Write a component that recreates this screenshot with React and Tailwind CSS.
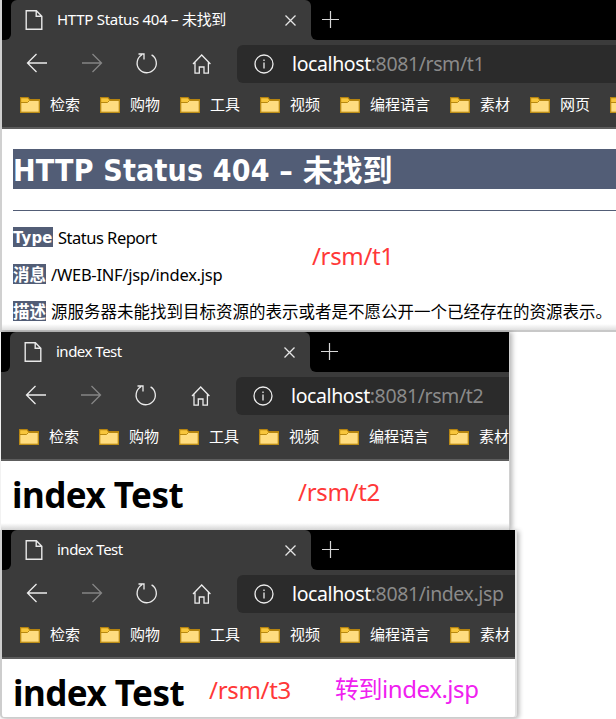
import React from 'react';

const UI = "font-['Noto_Sans','Noto_Sans_CJK_SC',sans-serif]";
const BOOKMARKS = ['检索', '购物', '工具', '视频', '编程语言', '素材'];

function FileIcon() {
  return (
    <svg width="18" height="20" viewBox="0 0 18 20" fill="none" stroke="#e8e8e8" strokeWidth="1.4" className="shrink-0">
      <path d="M1.2 0.8H11.4L16.8 6.2V19.2H1.2ZM11.2 0.8V6.3H16.8" />
    </svg>
  );
}

function FolderIcon() {
  return (
    <svg width="20" height="16" viewBox="0 0 20 16" className="shrink-0">
      <path d="M0.6 0.6H8L9.6 2.6H19.4V15.4H0.6Z" fill="#f8c63c" stroke="#b5830f" strokeWidth="1.2" />
      <path d="M0.8 5.5H7.5L9.5 3.5H19.2V15.2H0.8Z" fill="#ffdd80" stroke="#b88810" strokeWidth="1" />
    </svg>
  );
}

function NavIcons() {
  return (
    <svg width="232" height="50" viewBox="0 0 232 50" fill="none" stroke="#ececec" strokeWidth="1.3" className="shrink-0">
      <path d="M45 23H25.5M34.5 14L25.5 23L34.5 32" />
      <path d="M80 23H99.5M90.5 14L99.5 23L90.5 32" stroke="#858585" />
      <path d="M149.6 14.9A9.6 9.6 0 1 1 140 14.8M136.5 14H142V19.6" />
      <path d="M191 24L199.7 15L208.4 24M193 22.5V33.2H197.3V27H202V33.2H206.4V22.5" />
    </svg>
  );
}

function Bookmark({ name }) {
  return (
    <div className="flex shrink-0 items-center gap-[10px] whitespace-nowrap text-[15px] leading-5">
      <FolderIcon />
      <span className="-mt-[2px]">{name}</span>
    </div>
  );
}

function Chrome({ title, titleClass, path, pathClass, extra }) {
  return (
    <div className={`flex h-[129px] flex-col overflow-hidden border-b-2 border-[#5d5d5d] bg-[#3b3b3b] text-white ${UI}`}>
      <div className="flex h-10 shrink-0">
        <div className="z-10 w-[9px] shrink-0 rounded-br-md bg-black" />
        <div className="-mx-[6px] flex w-[312px] shrink-0 bg-linear-to-b from-black from-50% to-[#3b3b3b] to-50%">
          <div className="ml-[6px] flex h-10 w-[300px] items-center rounded-t-md bg-[#3b3b3b] pl-[14px] pr-[15px]">
            <FileIcon />
            <span className={`-mt-[2px] ml-[14px] whitespace-nowrap text-[15px] leading-5 ${titleClass}`}>{title}</span>
            <svg width="11" height="11" viewBox="0 0 11 11" stroke="#e6e6e6" strokeWidth="1.3" className="ml-auto">
              <path d="M0.5 0.5L10.5 10.5M10.5 0.5L0.5 10.5" />
            </svg>
          </div>
        </div>
        <div className="z-10 flex flex-1 items-center rounded-bl-md bg-black pl-[11px]">
          <svg width="17" height="17" viewBox="0 0 17 17" stroke="#d8d8d8" strokeWidth="1.2" className="-mt-[2px]">
            <path d="M8.5 0V17M0 8.5H17" />
          </svg>
        </div>
      </div>
      <div className="flex h-[50px] shrink-0">
        <NavIcons />
        <div className="ml-[3px] mt-[5px] flex h-[38px] min-w-0 flex-1 items-center rounded-l-md bg-[#2b2b2b] pl-[17px]">
          <svg width="20" height="20" viewBox="0 0 20 20" fill="none" stroke="#ececec" strokeWidth="1.3" className="-mt-px shrink-0">
            <circle cx="10" cy="10" r="9" />
            <path d="M10 8.6V14.5M10 5.5V7.1" />
          </svg>
          <span className={`ml-[18px] whitespace-nowrap text-[19.5px] leading-6 text-[#8a8a8a] ${pathClass}`}>
            <span className="text-white">localhost</span>:8081/{path}
          </span>
        </div>
      </div>
      <div className="flex h-[30px] shrink-0 items-center gap-5 pl-[18px]">
        {BOOKMARKS.map((name) => (
          <Bookmark key={name} name={name} />
        ))}
        {extra && (
          <>
            <Bookmark name={extra} />
            <FolderIcon />
          </>
        )}
      </div>
    </div>
  );
}

function Note({ className, children }) {
  return <div className={`absolute whitespace-nowrap leading-8 ${UI} ${className}`}>{children}</div>;
}

function Field({ label, labelClass, textClass, children }) {
  return (
    <p className="flex h-5 items-center whitespace-nowrap text-[16.5px] leading-[22px] text-black">
      <b className={`h-5 bg-[#525d76] text-white ${labelClass}`}>{label}</b>
      <span className={`ml-[5px] mt-[2px] ${textClass}`}>{children}</span>
    </p>
  );
}

export default function App() {
  return (
    <div className="flex h-[719px] w-[616px] flex-col overflow-hidden bg-white">
      <div className="h-[332px] shrink-0 border-b-2 border-l-2 border-b-[#c8c8c8] border-l-[#d0d0d0] bg-white">
        <Chrome title="HTTP Status 404 – 未找到" titleClass="tracking-[-0.28px]" path="rsm/t1" pathClass="tracking-[-0.4px]" extra="网页" />
        <div className="relative flex h-[201px] flex-col bg-linear-to-b from-white from-97% to-[#e0e0e0] pl-[11px] pt-5 font-['Noto_Sans','Noto_Sans_CJK_SC',sans-serif]">
          <h1 className="h-10 shrink-0 whitespace-nowrap bg-[#525d76] font-['DejaVu_Sans_Condensed','DejaVu_Sans','Noto_Sans_CJK_SC',sans-serif] text-[30px] font-bold leading-[43px] tracking-[0.2px] text-white [font-stretch:condensed]">
            HTTP Status 404 – <span className="tracking-normal">未找到</span>
          </h1>
          <div className="mt-[21px] h-px shrink-0 bg-[#525d76]" />
          <div className="mt-4 flex flex-col gap-[17px]">
            <Field
              label="Type"
              labelClass="w-10 font-['DejaVu_Sans_Condensed','DejaVu_Sans',sans-serif] tracking-[0.3px] [font-stretch:condensed]"
              textClass="tracking-[-0.5px]"
            >
              Status Report
            </Field>
            <Field label="消息" labelClass="w-[33px]" textClass="tracking-[-0.26px]">/WEB-INF/jsp/index.jsp</Field>
            <Field label="描述" labelClass="w-[33px]" textClass="">
              源服务器未能找到目标资源的表示或者是不愿公开一个已经存在的资源表示。
            </Field>
          </div>
          <Note className="left-[310px] top-[111px] text-[24px] tracking-[-0.35px] text-[#ff3838]">/rsm/t1</Note>
        </div>
      </div>

      <div className="ml-px h-[198px] w-[509px] shrink-0 border-r border-[#d0d0d0] bg-white shadow-[2px_0_5px_rgba(0,0,0,0.3)]">
        <div className="w-[508px]">
          <Chrome title="index Test" titleClass="tracking-[-0.5px]" path="rsm/t2" pathClass="tracking-[-0.4px]" />
        </div>
        <div className="relative h-[69px] bg-linear-to-b from-white from-90% to-[#d4d4d4] pl-[11px] pt-[13px]">
          <h1 className={`whitespace-nowrap text-[35px] font-bold leading-[42px] tracking-[-0.5px] text-black ${UI}`}>index Test</h1>
          <Note className="left-[297px] top-[15px] text-[24px] tracking-[-0.3px] text-[#ff3838]">/rsm/t2</Note>
        </div>
      </div>

      <div className="h-[188px] w-[517px] shrink-0 rounded-b border-b border-l-2 border-r-2 border-[#cdcdcd] border-r-[#e4e4e4] bg-white shadow-[2px_1px_5px_rgba(0,0,0,0.3)]">
        <Chrome title="index Test" titleClass="tracking-[-0.5px]" path="index.jsp" pathClass="tracking-[-0.4px]" />
        <div className="relative h-[58px] pl-[11px] pt-[13px]">
          <h1 className={`whitespace-nowrap text-[35px] font-bold leading-[42px] tracking-[-0.5px] text-black ${UI}`}>index Test</h1>
          <Note className="left-[207px] top-[15px] text-[24px] tracking-[-0.3px] text-[#ff3838]">/rsm/t3</Note>
          <Note className="left-[333px] top-[14px] text-[24px] tracking-[-0.45px] text-[#f020f0]">转到index.jsp</Note>
        </div>
      </div>
    </div>
  );
}
